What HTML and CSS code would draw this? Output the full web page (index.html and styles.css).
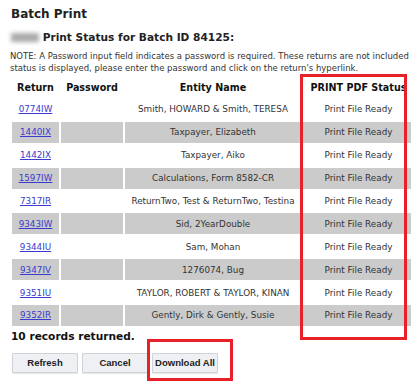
FILE: index.html
```html
<!DOCTYPE html>
<html lang="en">

<head>
    <meta charset="UTF-8">
    <meta name="viewport" content="width=device-width, initial-scale=1.0">
    <title>Batch Print</title>
    <link rel="stylesheet" href="styles.css">
</head>

<body>

    <div class="page">
        <h1 class="titulo">Batch Print</h1>
        <h2 class="subtitulo"><span class="nome"></span> Print Status for Batch ID 84125:</h2>

        <p class="nota">NOTE: A Password input field indicates a password is required. These returns are not included<br>
            status is displayed, please enter the password and click on the return's hyperlink.</p>

        <table class="lista">
            <colgroup>
                <col class="c-ret">
                <col class="c-pass">
                <col class="c-ent">
                <col class="c-stat">
            </colgroup>
            <tr>
                <th>Return</th>
                <th>Password</th>
                <th>Entity Name</th>
                <th>PRINT PDF Status</th>
            </tr>
            <tr>
                <td><a href="#">0774IW</a></td>
                <td></td>
                <td>Smith, HOWARD &amp; Smith, TERESA</td>
                <td>Print File Ready</td>
            </tr>
            <tr class="alt">
                <td><a href="#">1440IX</a></td>
                <td></td>
                <td>Taxpayer, Elizabeth</td>
                <td>Print File Ready</td>
            </tr>
            <tr>
                <td><a href="#">1442IX</a></td>
                <td></td>
                <td>Taxpayer, Aiko</td>
                <td>Print File Ready</td>
            </tr>
            <tr class="alt">
                <td><a href="#">1597IW</a></td>
                <td></td>
                <td>Calculations, Form 8582-CR</td>
                <td>Print File Ready</td>
            </tr>
            <tr>
                <td><a href="#">7317IR</a></td>
                <td></td>
                <td>ReturnTwo, Test &amp; ReturnTwo, Testina</td>
                <td>Print File Ready</td>
            </tr>
            <tr class="alt">
                <td><a href="#">9343IW</a></td>
                <td></td>
                <td>Sid, 2YearDouble</td>
                <td>Print File Ready</td>
            </tr>
            <tr>
                <td><a href="#">9344IU</a></td>
                <td></td>
                <td>Sam, Mohan</td>
                <td>Print File Ready</td>
            </tr>
            <tr class="alt">
                <td><a href="#">9347IV</a></td>
                <td></td>
                <td>1276074, Bug</td>
                <td>Print File Ready</td>
            </tr>
            <tr>
                <td><a href="#">9351IU</a></td>
                <td></td>
                <td>TAYLOR, ROBERT &amp; TAYLOR, KINAN</td>
                <td>Print File Ready</td>
            </tr>
            <tr class="alt">
                <td><a href="#">9352IR</a></td>
                <td></td>
                <td>Gently, Dirk &amp; Gently, Susie</td>
                <td>Print File Ready</td>
            </tr>
        </table>

        <p class="total">10 records returned.</p>

        <div class="botoes">
            <button class="btn">Refresh</button>
            <button class="btn">Cancel</button>
            <button class="btn">Download All</button>
        </div>

        <!-- marcacoes vermelhas do print -->
        <div class="marca marca-status"></div>
        <div class="marca marca-download"></div>
    </div>

</body>

</html>
```

FILE: styles.css
```css
body {
    margin: 0;
    font-family: "DejaVu Sans", Verdana, sans-serif;
    color: #222;
    background-color: #fff;
    overflow: hidden;
}

.page {
    position: relative;
    padding: 4px 0 0 11px;
    width: 420px;
    height: 384px;
}

.titulo {
    font-size: 12px;
    font-weight: bold;
    margin: 0;
    height: 20px;
    line-height: 20px;
}

.subtitulo {
    font-size: 10.6px;
    font-weight: bold;
    margin: 6px 0 0 0;
    height: 14px;
    line-height: 14px;
    white-space: nowrap;
}

.nome {
    display: inline-block;
    width: 28px;
    height: 9px;
    background-color: #aaa;
    filter: blur(2px);
    vertical-align: -1px;
}

.nota {
    font-size: 8.5px;
    line-height: 12px;
    height: 24px;
    margin: 6px 0 0 -1px;
    white-space: nowrap;
    color: #333;
}

.lista {
    table-layout: fixed;
    border-spacing: 2px;
    margin: 1px 0 0 -1px;
    width: 406px;
    font-size: 8.8px;
}

.c-ret {
    width: 47px;
}

.c-pass {
    width: 62px;
}

.c-ent {
    width: 176px;
}

.c-stat {
    width: 111px;
}

.lista th {
    height: 20px;
    padding: 0;
    font-size: 9.6px;
    white-space: nowrap;
    color: #111;
}

.lista td {
    height: 20.9px;
    padding: 0;
    text-align: center;
    white-space: nowrap;
    color: #333;
}

.lista tr.alt td {
    background-color: #cbcbcb;
}

.lista a {
    color: #3b3bd0;
}

.total {
    font-size: 10.6px;
    font-weight: bold;
    margin: 0;
    height: 16px;
    line-height: 16px;
    color: #111;
}

.botoes {
    display: flex;
    gap: 4px;
    margin-top: 9px;
    padding-left: 1px;
}

.btn {
    width: 66px;
    height: 20px;
    padding: 0;
    font-family: "Liberation Sans", Arial, sans-serif;
    font-weight: bold;
    font-size: 9.5px;
    color: #222;
    background-color: #eef0f4;
    border: 1px solid #cfd2d6;
    border-radius: 1px;
    box-shadow: 0 1px 1px rgba(0, 0, 0, 0.1);
    white-space: nowrap;
}

.marca {
    position: absolute;
    border: 3px solid #e8202a;
    box-sizing: border-box;
}

.marca-status {
    left: 300px;
    top: 74px;
    width: 107px;
    height: 266px;
}

.marca-download {
    left: 147px;
    top: 339px;
    width: 86px;
    height: 42px;
}
```
